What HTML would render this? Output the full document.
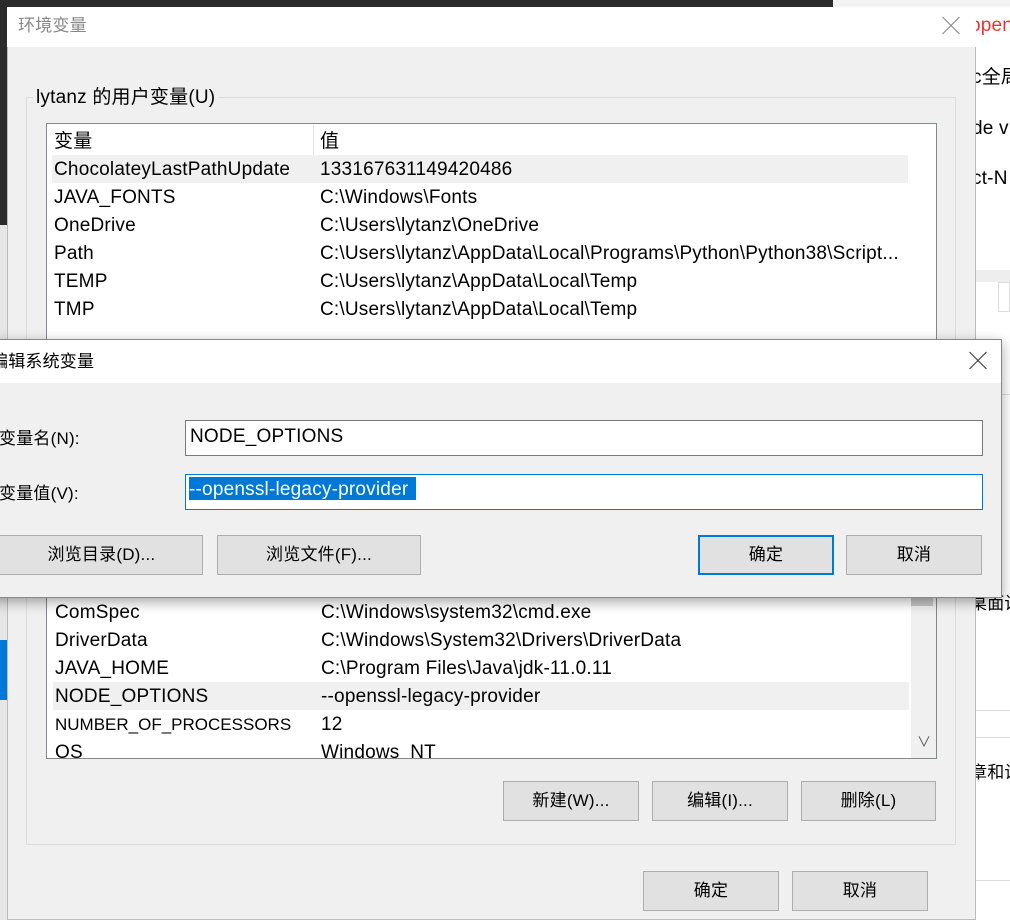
<!DOCTYPE html>
<html><head><meta charset="utf-8"><style>
*{box-sizing:border-box;margin:0;padding:0}
body{width:1010px;height:920px;position:relative;overflow:hidden;background:#fff;font-family:"Liberation Sans","Noto Sans CJK SC",sans-serif;font-size:19px;letter-spacing:.2px;color:#000}
.a{position:absolute}
.t{position:absolute;white-space:nowrap;line-height:29px}
.btn{position:absolute;background:#e1e1e1;border:1px solid #adadad;text-align:center;line-height:37px;font-size:17px}
.x{position:absolute;width:18px;height:18px}
.x:before,.x:after{content:"";position:absolute;left:-3px;top:8px;width:24px;height:1px;background:#333;transform:rotate(45deg)}
.x:after{transform:rotate(-45deg)}
</style></head><body>
<div class="a" style="left:0;top:0;width:833px;height:7px;background:#2b2b2b"></div>
<div class="a" style="left:833px;top:0;width:177px;height:7px;background:#f3f3f3"></div>
<div class="a" style="left:0;top:0;width:7px;height:225px;background:#2b2b2b"></div>
<div class="a" style="left:0;top:225px;width:7px;height:695px;background:#e6e6e6"></div>
<div class="a" style="left:0;top:640px;width:7px;height:60px;background:#0078d7"></div>
<div class="t" style="left:970px;top:11px;color:#e33;font-size:19px">open</div>
<div class="t" style="left:972px;top:63px;font-size:19px">c全局</div>
<div class="t" style="left:972px;top:114px;font-size:19px">de v</div>
<div class="t" style="left:972px;top:164px;font-size:19px">ct-N</div>
<div class="a" style="left:975px;top:270px;width:35px;height:12px;background:#eee"></div>
<div class="a" style="left:998px;top:282px;width:12px;height:30px;border:1px solid #ddd"></div>
<div class="a" style="left:975px;top:394px;width:35px;height:1px;background:#ddd"></div>
<div class="a" style="left:975px;top:710px;width:35px;height:1px;background:#ddd"></div>
<div class="a" style="left:975px;top:737px;width:35px;height:1px;background:#ddd"></div>
<div class="a" style="left:975px;top:880px;width:35px;height:1px;background:#ddd"></div>
<div class="t" style="left:970px;top:589px;font-size:17px">桌面设</div>
<div class="t" style="left:970px;top:758px;font-size:17px">章和设</div>

<div class="a" style="left:7px;top:7px;width:969px;height:913px;background:#f0f0f0;border:1px solid #bbb;border-top:none"></div>
<div class="a" style="left:7px;top:7px;width:969px;height:40px;background:#fff"></div>
<div class="t" style="left:18px;top:11px;color:#888;font-size:17px">环境变量</div>
<div class="x" style="left:942px;top:17px;opacity:.6"></div>
<div class="a" style="left:26px;top:97px;width:930px;height:748px;border:1px solid #dcdcdc"></div>
<div class="t" style="left:33px;top:83px;background:#f0f0f0;padding:0 3px">lytanz 的用户变量(U)</div>
<div class="a" style="left:46px;top:123px;width:891px;height:230px;background:#fff;border:1px solid #828790"></div>
<div class="a" style="left:313px;top:125px;width:1px;height:30px;background:#e5e5e5"></div>
<div class="t" style="left:54px;top:127px">变量</div><div class="t" style="left:320px;top:127px">值</div>
<div class="a" style="left:52px;top:155px;width:856px;height:28px;background:#f0f0f0"></div>
<div class="t" style="left:54px;top:155px">ChocolateyLastPathUpdate</div><div class="t" style="left:320px;top:155px">133167631149420486</div>
<div class="t" style="left:54px;top:183px">JAVA_FONTS</div><div class="t" style="left:320px;top:183px">C:\Windows\Fonts</div>
<div class="t" style="left:54px;top:211px">OneDrive</div><div class="t" style="left:320px;top:211px">C:\Users\lytanz\OneDrive</div>
<div class="t" style="left:54px;top:239px">Path</div><div class="t" style="left:320px;top:239px;width:585px;overflow:hidden">C:\Users\lytanz\AppData\Local\Programs\Python\Python38\Script...</div>
<div class="t" style="left:54px;top:267px">TEMP</div><div class="t" style="left:320px;top:267px">C:\Users\lytanz\AppData\Local\Temp</div>
<div class="t" style="left:54px;top:295px">TMP</div><div class="t" style="left:320px;top:295px">C:\Users\lytanz\AppData\Local\Temp</div>

<div class="a" style="left:46px;top:580px;width:891px;height:179px;background:#fff;border:1px solid #828790;border-top:none;overflow:hidden">
 <div class="a" style="left:864px;top:0;width:26px;height:178px;background:#f0f0f0"></div>
 <div class="a" style="left:864px;top:17px;width:22px;height:9px;background:#c8c8c8"></div>
 <div class="t" style="left:870px;top:148px;font-size:14px;color:#555">&#8744;</div>
 <div class="a" style="left:6px;top:102px;width:856px;height:28px;background:#f0f0f0"></div>
 <div class="t" style="left:8px;top:18px">ComSpec</div><div class="t" style="left:274px;top:18px">C:\Windows\system32\cmd.exe</div>
 <div class="t" style="left:8px;top:46px">DriverData</div><div class="t" style="left:274px;top:46px">C:\Windows\System32\Drivers\DriverData</div>
 <div class="t" style="left:8px;top:74px">JAVA_HOME</div><div class="t" style="left:274px;top:74px">C:\Program Files\Java\jdk-11.0.11</div>
 <div class="t" style="left:8px;top:102px">NODE_OPTIONS</div><div class="t" style="left:274px;top:102px">--openssl-legacy-provider</div>
 <div class="t" style="left:8px;top:130px;font-size:17px;letter-spacing:0">NUMBER_OF_PROCESSORS</div><div class="t" style="left:274px;top:130px">12</div>
 <div class="t" style="left:8px;top:158px">OS</div><div class="t" style="left:274px;top:158px">Windows_NT</div>
</div>
<div class="btn" style="left:503px;top:781px;width:136px;height:40px">新建(W)...</div>
<div class="btn" style="left:652px;top:781px;width:136px;height:40px">编辑(I)...</div>
<div class="btn" style="left:801px;top:781px;width:135px;height:40px">删除(L)</div>
<div class="btn" style="left:643px;top:871px;width:136px;height:40px">确定</div>
<div class="btn" style="left:792px;top:871px;width:136px;height:40px">取消</div>

<div class="a" style="left:-10px;top:339px;width:1012px;height:259px;background:#f0f0f0;border:1px solid #888;box-shadow:0 4px 12px rgba(0,0,0,.35)"></div>
<div class="a" style="left:-9px;top:340px;width:1010px;height:43px;background:#fff"></div>
<div class="t" style="left:-9px;top:347px;font-size:17px">编辑系统变量</div>
<div class="x" style="left:969px;top:352px"></div>
<div class="t" style="left:-1px;top:424px;font-size:17px">变量名(N):</div>
<div class="t" style="left:-1px;top:479px;font-size:17px">变量值(V):</div>
<div class="a" style="left:185px;top:420px;width:798px;height:36px;background:#fff;border:1px solid #7a7a7a"></div>
<div class="t" style="left:190px;top:422px">NODE_OPTIONS</div>
<div class="a" style="left:185px;top:474px;width:798px;height:36px;background:#fff;border:1px solid #0078d7"></div>
<div class="a" style="left:189px;top:477px;width:227px;height:23px;background:#0078d7"></div>
<div class="t" style="left:189px;top:475px;color:#fff">--openssl-legacy-provider</div>
<div class="btn" style="left:-10px;top:535px;width:213px;height:40px">&nbsp;&nbsp;浏览目录(D)...</div>
<div class="btn" style="left:217px;top:535px;width:204px;height:40px">浏览文件(F)...</div>
<div class="btn" style="left:698px;top:535px;width:136px;height:40px;border:2px solid #0078d7;line-height:35px">确定</div>
<div class="btn" style="left:846px;top:535px;width:136px;height:40px">取消</div>
</body></html>
